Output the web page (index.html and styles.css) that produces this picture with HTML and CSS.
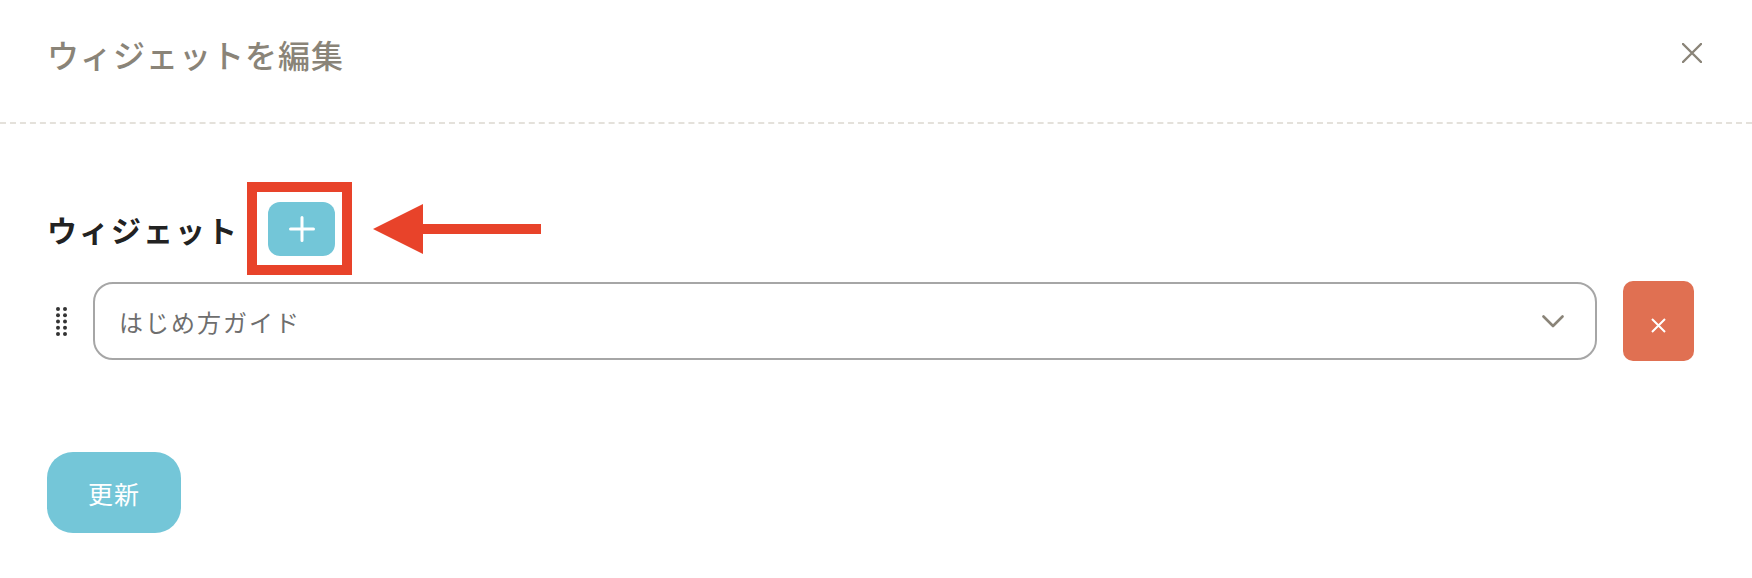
FILE: index.html
```html
<!DOCTYPE html>
<html lang="ja">
<head>
    <meta charset="UTF-8">
    <meta name="viewport" content="width=device-width, initial-scale=1.0">
    <title>ウィジェットを編集</title>
    <link rel="stylesheet" href="styles.css">
</head>
<body>
    <div class="modal">
        <div class="modal-header">
            <h2 class="modal-title">ウィジェットを編集</h2>
            <button class="close-btn" type="button" aria-label="閉じる">
                <svg width="20" height="20" viewBox="0 0 20 20">
                    <path d="M1 1 L19 19 M19 1 L1 19" stroke="#8a8478" stroke-width="2.4" stroke-linecap="round"/>
                </svg>
            </button>
        </div>

        <div class="modal-body">
            <div class="label-row">
                <span class="section-label">ウィジェット</span>
                <div class="highlight">
                    <button class="add-btn" type="button" aria-label="追加">
                        <svg width="26" height="26" viewBox="0 0 26 26">
                            <path d="M13 1.5 V24.5 M1.5 13 H24.5" stroke="#fff" stroke-width="3" stroke-linecap="round"/>
                        </svg>
                    </button>
                </div>
                <svg class="arrow" width="170" height="52" viewBox="0 0 170 52">
                    <polygon points="0,26 50,1 50,51" fill="#e8432a"/>
                    <rect x="49" y="21" width="119" height="10" fill="#e8432a"/>
                </svg>
            </div>

            <div class="widget-row">
                <span class="handle">
                    <svg width="11" height="29" viewBox="0 0 11 29">
                        <circle cx="2" cy="2" r="2"/><circle cx="9" cy="2" r="2"/>
                        <circle cx="2" cy="8.25" r="2"/><circle cx="9" cy="8.25" r="2"/>
                        <circle cx="2" cy="14.5" r="2"/><circle cx="9" cy="14.5" r="2"/>
                        <circle cx="2" cy="20.75" r="2"/><circle cx="9" cy="20.75" r="2"/>
                        <circle cx="2" cy="27" r="2"/><circle cx="9" cy="27" r="2"/>
                    </svg>
                </span>
                <div class="select">
                    <span class="select-value">はじめ方ガイド</span>
                    <svg class="chevron" width="22" height="13" viewBox="0 0 22 13">
                        <path d="M1.5 1.5 L11 11 L20.5 1.5" fill="none" stroke="#8a8478" stroke-width="2.6" stroke-linecap="round" stroke-linejoin="round"/>
                    </svg>
                </div>
                <button class="delete-btn" type="button" aria-label="削除">
                    <svg width="15" height="15" viewBox="0 0 15 15">
                        <path d="M1 1 L14 14 M14 1 L1 14" stroke="#fff" stroke-width="2"/>
                    </svg>
                </button>
            </div>

            <button class="update-btn" type="button">更新</button>
        </div>
    </div>
</body>
</html>
```

FILE: styles.css
```css
body {
    margin: 0;
    background: #fff;
    font-family: 'Noto Sans CJK JP', 'Noto Sans', sans-serif;
    color: #222;
}

button {
    font-family: inherit;
    border: none;
    cursor: pointer;
}

.modal-header {
    display: flex;
    justify-content: space-between;
    align-items: flex-start;
    height: 76px;
    padding: 31px 50px 15px 47px;
    border-bottom: 2px dashed #e4e1db;
}
.modal-title {
    margin: 0;
    font-size: 32px;
    font-weight: 500;
    line-height: 46px;
    letter-spacing: 1px;
    color: #8a8478;
}
.close-btn {
    background: none;
    padding: 0;
    margin-top: 12px;
    width: 20px;
    height: 20px;
    display: flex;
}

.modal-body {
    padding: 58px 58px 0 47px;
}

.label-row {
    display: flex;
    align-items: center;
}
.section-label {
    font-size: 30px;
    font-weight: 700;
    letter-spacing: 2px;
    margin-right: 8px;
}
.highlight {
    border: 10px solid #e8432a;
    padding: 10px 7px 9px 11px;
    display: flex;
}
.add-btn {
    width: 67px;
    height: 54px;
    border-radius: 12px;
    background: #73c6d8;
    display: flex;
    align-items: center;
    justify-content: center;
    padding: 0;
}
.arrow {
    margin-left: 21px;
    display: block;
}

.widget-row {
    display: flex;
    align-items: center;
    margin-top: 6px;
    height: 80px;
}
.handle {
    display: flex;
    margin-left: 9px;
    margin-right: 26px;
    fill: #333;
}
.select {
    flex: 1;
    height: 74px;
    border: 2px solid #a6a6a6;
    border-radius: 20px;
    display: flex;
    align-items: center;
    justify-content: space-between;
    padding: 0 31px 0 24px;
}
.select-value {
    font-size: 24px;
    letter-spacing: 2px;
    color: #6e6e6e;
}
.chevron {
    display: block;
}
.delete-btn {
    width: 71px;
    height: 80px;
    margin-left: 26px;
    border-radius: 10px;
    background: #e07052;
    display: flex;
    align-items: center;
    justify-content: center;
    padding: 8px 0 0;
}

.update-btn {
    margin-top: 91px;
    width: 134px;
    height: 81px;
    border-radius: 26px;
    background: #74c6d8;
    color: #fff;
    font-size: 25px;
    letter-spacing: 1px;
    padding: 0;
}
```
